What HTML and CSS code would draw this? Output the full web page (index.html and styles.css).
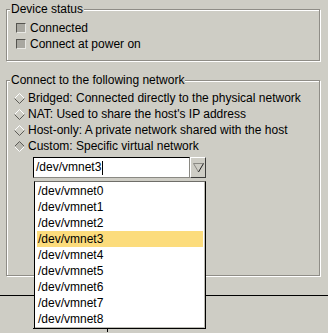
FILE: index.html
```
<!DOCTYPE html>
<html>
<head>
<meta charset="UTF-8">
<title>Network adapter</title>
<link rel="stylesheet" href="styles.css">
</head>
<body>
	<div class="group status">
		<span class="group-title">Device status</span>
		<div class="row"><span class="check"></span>Connected</div>
		<div class="row"><span class="check"></span>Connect at power on</div>
	</div>

	<div class="group network">
		<span class="group-title">Connect to the following network</span>
		<div class="row">
			<svg class="radio" width="11" height="11" viewBox="0 0 11 11"><polygon points="5.5,0.5 10.5,5.5 5.5,10.5 0.5,5.5" fill="#cecdc5"/><polyline points="0.5,5.5 5.5,0.5 10.5,5.5" fill="none" stroke="#ffffff"/><polyline points="0.5,5.5 5.5,10.5 10.5,5.5" fill="none" stroke="#5c5b56"/></svg>
			Bridged: Connected directly to the physical network
		</div>
		<div class="row">
			<svg class="radio" width="11" height="11" viewBox="0 0 11 11"><polygon points="5.5,0.5 10.5,5.5 5.5,10.5 0.5,5.5" fill="#cecdc5"/><polyline points="0.5,5.5 5.5,0.5 10.5,5.5" fill="none" stroke="#ffffff"/><polyline points="0.5,5.5 5.5,10.5 10.5,5.5" fill="none" stroke="#5c5b56"/></svg>
			NAT: Used to share the host's IP address
		</div>
		<div class="row">
			<svg class="radio" width="11" height="11" viewBox="0 0 11 11"><polygon points="5.5,0.5 10.5,5.5 5.5,10.5 0.5,5.5" fill="#cecdc5"/><polyline points="0.5,5.5 5.5,0.5 10.5,5.5" fill="none" stroke="#ffffff"/><polyline points="0.5,5.5 5.5,10.5 10.5,5.5" fill="none" stroke="#5c5b56"/></svg>
			Host-only: A private network shared with the host
		</div>
		<div class="row">
			<svg class="radio" width="11" height="11" viewBox="0 0 11 11"><polygon points="5.5,0.5 10.5,5.5 5.5,10.5 0.5,5.5" fill="#b9b8b0"/><polyline points="0.5,5.5 5.5,0.5 10.5,5.5" fill="none" stroke="#5c5b56"/><polyline points="0.5,5.5 5.5,10.5 10.5,5.5" fill="none" stroke="#ffffff"/></svg>
			Custom: Specific virtual network
		</div>

		<div class="combo">
			<div class="entry">/dev/vmnet3<span class="caret"></span></div>
			<div class="drop">
				<svg width="11" height="11" viewBox="0 0 11 11"><polyline points="5.5,10 0.5,1.5 10.5,1.5" fill="none" stroke="#8a8983"/><line x1="10.5" y1="1.5" x2="5.5" y2="10" stroke="#1e1e1e"/></svg>
			</div>
			<ul class="popup">
				<li>/dev/vmnet0</li>
				<li>/dev/vmnet1</li>
				<li>/dev/vmnet2</li>
				<li class="selected">/dev/vmnet3</li>
				<li>/dev/vmnet4</li>
				<li>/dev/vmnet5</li>
				<li>/dev/vmnet6</li>
				<li>/dev/vmnet7</li>
				<li>/dev/vmnet8</li>
			</ul>
		</div>
	</div>

	<div class="footer">
		<div class="buttons"><span class="btn-a"></span><span class="btn-b"></span></div>
	</div>
</body>
</html>
```

FILE: styles.css
```
html, body {
	margin: 0;
	padding: 0;
}

body {
	background: #cecdc5;
	font-family: "Liberation Sans", Arial, sans-serif;
	font-size: 12px;
	color: #000;
	height: 333px;
	overflow: hidden;
}

.group {
	position: relative;
	margin: 9px 8px 0 6px;
	border: 1px solid #8f8d87;
	box-shadow: inset 1px 1px 0 #fff, 1px 1px 0 #fff;
	padding: 10px 8px 8px 8px;
}

.network {
	margin-top: 19px;
	padding: 9px 8px 97px 7px;
}

.group-title {
	position: absolute;
	top: -8px;
	left: 3px;
	padding: 0 1px;
	line-height: 15px;
	background: #cecdc5;
}

.row {
	display: flex;
	align-items: center;
	height: 16px;
	line-height: 16px;
	white-space: nowrap;
}

.check {
	width: 8px;
	height: 8px;
	margin: 0 4px 0 1px;
	background: #a9a8a1;
	border-top: 1px solid #55544f;
	border-left: 1px solid #55544f;
	border-right: 1px solid #e8e8e4;
	border-bottom: 1px solid #e8e8e4;
}

.radio {
	margin-right: 3px;
	flex-shrink: 0;
}

.combo {
	position: relative;
	display: flex;
	width: 173px;
	height: 21px;
	margin: 3px 0 0 19px;
}

.entry {
	flex: 1;
	background: #fff;
	border-top: 1px solid #000;
	border-left: 1px solid #000;
	border-bottom: 1px solid #8a8983;
	border-right: 1px solid #8a8983;
	padding-left: 2px;
	line-height: 19px;
	display: flex;
	align-items: center;
}

.caret {
	display: inline-block;
	width: 1px;
	height: 14px;
	background: #000;
	margin-left: 1px;
}

.drop {
	width: 14px;
	border-top: 1px solid #fff;
	border-left: 1px solid #fff;
	border-right: 1px solid #3c3c3a;
	border-bottom: 1px solid #3c3c3a;
	display: flex;
	align-items: center;
	justify-content: center;
}

.popup {
	position: absolute;
	left: 1px;
	top: 24px;
	width: 166px;
	margin: 0;
	padding: 1px 2px 1px 2px;
	list-style: none;
	background: #fff;
	border-left: 1px solid #000;
	border-top: 1px solid #6f6e69;
	border-right: 1px solid #000;
	border-bottom: 1px solid #000;
	box-shadow: inset -1px -1px 0 #bdbcb5, inset 1px 0 0 #fff;
}

.popup li {
	height: 16px;
	line-height: 16px;
	padding-left: 1px;
}

.popup li.selected {
	background: #fcdc7c;
}

.footer {
	margin-top: 19px;
	border-top: 1px solid #000;
}

.buttons {
	display: flex;
	margin: 32px 0 0 33px;
}

.btn-a {
	width: 74px;
	height: 3px;
	border-top: 1px solid #000;
	border-right: 1px solid #000;
}

.btn-b {
	width: 31px;
	height: 3px;
	border-top: 1px solid #8f8d87;
}
```
